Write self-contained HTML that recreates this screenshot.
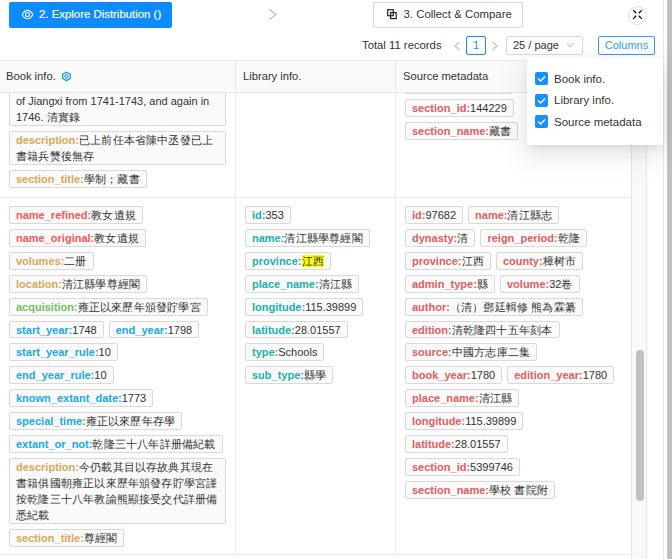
<!DOCTYPE html>
<html><head><meta charset="utf-8">
<style>
*{box-sizing:border-box}
html,body{margin:0;padding:0}
body{width:672px;height:559px;overflow:hidden;position:relative;background:#fff;font-family:"Liberation Sans",sans-serif;font-size:11px;color:#333}
.abs{position:absolute}
.btnp{left:9px;top:2px;width:163px;height:26px;background:#0d8bff;border-radius:2px;color:#fff;line-height:26px;white-space:nowrap}
.btnd{left:373px;top:2px;width:150px;height:26px;border:1px solid #d9d9d9;border-radius:2px;color:#333;line-height:24px;white-space:nowrap}
.txt{white-space:nowrap}
.box{border:1px solid #d9d9d9;border-radius:2px;height:19px;line-height:17px;white-space:nowrap}
/* table */
.hdr{left:0;top:60px;width:631px;height:33px;background:#fafafa;border-top:1px solid #ebebeb;border-bottom:1px solid #e8e8e8}
.hc{position:absolute;top:0;height:31px;line-height:30px;padding-left:6px;white-space:nowrap;font-size:11.2px}
.vp{left:0;top:93px;width:631px;height:466px;overflow:hidden}
.inner{position:absolute;left:0;top:0;width:631px}
.row{position:absolute;left:0;width:631px;border-bottom:1px solid #ebebeb}
.cell{position:absolute;top:0;height:100%;padding:8px 9px 0 9px}
.c1{left:0;width:236px;border-right:1px solid #ebebeb}
.c2{left:236px;width:160px;border-right:1px solid #ebebeb}
.c3{left:396px;width:235px}
.t{display:inline-block;vertical-align:top;border:1px solid #d9d9d9;background:#fafafa;border-radius:2px;padding:0 6px;line-height:15.9px;margin:0 5px 5px 0;white-space:nowrap}
.blk{display:block;margin-right:0;white-space:normal}
.t b{font-weight:bold}
.in{position:relative;top:1px}
.r b{color:#ff5757}
.r3 b{color:#e45e5e}
.y b{color:#daa858}
.g b{color:#70c35a}
.bl b{color:#19a8ee}
.tl b{color:#20b1ab}
i{font-style:normal;display:inline-block;vertical-align:top;white-space:nowrap;overflow:hidden}
u{text-decoration:none;display:inline-block;vertical-align:top;width:11.2px;overflow:hidden}
u.sp{width:3px}
mark{background:#ffff00;color:#333}
.sb{left:631px;top:93px;width:16px;height:466px;background:#f9f9f9;border-left:1px solid #e6e6e6;border-right:1px solid #e6e6e6}
.thumb{left:636px;top:350px;width:8px;height:151px;border-radius:4px;background:#c1c1c1}
.panel{left:527px;top:58px;width:136px;height:87px;background:#fff;box-shadow:0 3px 6px -4px rgba(0,0,0,.12),0 6px 16px 0 rgba(0,0,0,.08),0 9px 28px 8px rgba(0,0,0,.05);border-radius:2px}
.cb{position:absolute;left:8px;width:13px;height:13px;background:#1890ff;border-radius:2px}
.cbl{position:absolute;left:27px;font-size:11.5px;white-space:nowrap;color:#333}
</style></head><body>

<!-- top bar -->
<div class="abs btnp">
  <svg class="abs" style="left:12px;top:6.5px" width="13" height="11" viewBox="0 0 13 11"><path d="M1.2 5.5 C3 2 4.8 1.3 6.5 1.3 C8.2 1.3 10 2 11.8 5.5 C10 9 8.2 9.7 6.5 9.7 C4.8 9.7 3 9 1.2 5.5 Z" fill="none" stroke="#fff" stroke-width="1.15"/><circle cx="6.5" cy="5.5" r="2" fill="none" stroke="#fff" stroke-width="1.15"/></svg>
  <span class="abs" style="left:30px;top:-1px;font-size:11.4px;-webkit-text-stroke:0.15px #fff">2. Explore Distribution ()</span>
</div>
<svg class="abs" style="left:268px;top:8px" width="10" height="13" viewBox="0 0 10 13"><path d="M1.5 1.5 L8 6.5 L1.5 11.5" fill="none" stroke="#bfbfbf" stroke-width="1.3"/></svg>

<div class="abs btnd">
  <svg class="abs" style="left:13px;top:6px" width="11" height="11" viewBox="0 0 11 11"><rect x="0.7" y="0.7" width="5.6" height="6" fill="none" stroke="#222" stroke-width="1.2"/><rect x="3.6" y="3.6" width="5.6" height="6" fill="none" stroke="#222" stroke-width="1.2"/></svg>
  <span class="abs" style="left:29.5px;top:-1px;font-size:11.4px">3. Collect &amp; Compare</span>
</div>

<div class="abs" style="left:628px;top:6px;width:19px;height:19px;border:1px solid #ddd;border-radius:50%"></div>
<svg class="abs" style="left:632px;top:9px" width="11" height="11" viewBox="0 0 11 11"><g stroke="#111" stroke-width="1.2" stroke-linecap="round"><path d="M1.4 1.4 L3.6 3.6"/><path d="M9.6 1.4 L7.4 3.6"/><path d="M1.4 9.6 L3.6 7.4"/><path d="M9.6 9.6 L7.4 7.4"/></g><g fill="#111"><path d="M4.4 4.4 L2.3 3.9 L3.9 2.3 Z"/><path d="M6.6 4.4 L8.7 3.9 L7.1 2.3 Z"/><path d="M4.4 6.6 L2.3 7.1 L3.9 8.7 Z"/><path d="M6.6 6.6 L8.7 7.1 L7.1 8.7 Z"/></g></svg>

<span class="abs txt" style="left:362px;top:37px;line-height:17px;font-size:11.3px">Total 11 records</span>
<svg class="abs" style="left:453px;top:41px" width="9" height="10" viewBox="0 0 9 10"><path d="M6.5 1 L2 5 L6.5 9" fill="none" stroke="#bfbfbf" stroke-width="1.1"/></svg>
<div class="abs box" style="left:466px;top:36px;width:20px;border-color:#1890ff;color:#1890ff;text-align:center">1</div>
<svg class="abs" style="left:490px;top:41px" width="9" height="10" viewBox="0 0 9 10"><path d="M2.5 1 L7 5 L2.5 9" fill="none" stroke="#bfbfbf" stroke-width="1.1"/></svg>
<div class="abs box" style="left:506px;top:36px;width:77px;padding-left:6px">25 / page</div>
<svg class="abs" style="left:566px;top:42px" width="8" height="7" viewBox="0 0 8 7"><path d="M0.8 1.2 L4 5 L7.2 1.2" fill="none" stroke="#bfbfbf" stroke-width="1"/></svg>
<div class="abs box" style="left:598px;top:36px;width:57px;border-color:#2f9dff;color:#2f9dff;text-align:center">Columns</div>

<!-- table header -->
<div class="abs hdr">
  <div class="hc" style="left:0">Book info.</div>
  <svg class="abs" style="left:61px;top:10px" width="11" height="11" viewBox="0 0 11 11"><path d="M5.5 1.2 L9.3 3.3 L9.3 7.5 L5.5 9.6 L1.7 7.5 L1.7 3.3 Z" fill="none" stroke="#1890ff" stroke-width="1.3" stroke-linejoin="round"/><circle cx="5.5" cy="5.4" r="1.6" fill="none" stroke="#1890ff" stroke-width="1.1"/></svg>
  <div class="hc" style="left:236px;border-left:1px solid #ebebeb;left:235px;padding-left:7px">Library info.</div>
  <div class="hc" style="left:395px;border-left:1px solid #ebebeb;padding-left:7px">Source metadata</div>
</div>

<!-- table body viewport -->
<div class="abs vp">
 <div class="inner">
  <!-- row 1: bottom border at page y=197 => local 104 -->
  <div class="row" style="top:-200px;height:305px">
   <div class="cell c1" style="padding-top:0">
     <div style="position:absolute;left:9px;right:9px;bottom:4px">
      <div class="t blk y" style="padding-top:0"><span class="in">... Jiangxi and held<br>of Jiangxi from 1741-1743, and again in<br>1746. <i style="width:33.6px"><u>清</u><u>實</u><u>錄</u></i></span></div>
      <div class="t blk y"><span class="in"><b>description:</b><i style="width:134.4px"><u>已</u><u>上</u><u>前</u><u>任</u><u>本</u><u>省</u><u>陳</u><u>中</u><u>丞</u><u>發</u><u>已</u><u>上</u></i><br><i style="width:78.4px"><u>書</u><u>籍</u><u>兵</u><u>燹</u><u>後</u><u>無</u><u>存</u></i></span></div>
      <div class="t y"><span class="in"><b>section_title:</b><i style="width:56px"><u>學</u><u>制</u><u>；</u><u>藏</u><u>書</u></i></span></div>
     </div>
   </div>
   <div class="cell c2"></div>
   <div class="cell c3">
     <div style="position:absolute;left:9px;right:9px;bottom:52px">
      <div class="t r3" style="width:108px;overflow:hidden"><span class="in"><b>section_id:</b>144228</span></div><br>
      <div class="t r3"><span class="in"><b>section_id:</b>144229</span></div><br>
      <div class="t r3"><span class="in"><b>section_name:</b><i style="width:22.4px"><u>藏</u><u>書</u></i></span></div>
     </div>
   </div>
  </div>
  <!-- row 2 -->
  <div class="row" style="top:105px;height:357px">
   <div class="cell c1">
    <div class="t r"><span class="in"><b>name_refined:</b><i style="width:44.8px"><u>教</u><u>女</u><u>遺</u><u>規</u></i></span></div><br>
    <div class="t r"><span class="in"><b>name_original:</b><i style="width:44.8px"><u>教</u><u>女</u><u>遺</u><u>規</u></i></span></div><br>
    <div class="t y"><span class="in"><b>volumes:</b><i style="width:22.4px"><u>二</u><u>册</u></i></span></div><br>
    <div class="t y"><span class="in"><b>location:</b><i style="width:78.4px"><u>清</u><u>江</u><u>縣</u><u>學</u><u>尊</u><u>經</u><u>閣</u></i></span></div><br>
    <div class="t g"><span class="in"><b>acquisition:</b><i style="width:123.2px"><u>雍</u><u>正</u><u>以</u><u>來</u><u>歷</u><u>年</u><u>頒</u><u>發</u><u>貯</u><u>學</u><u>宮</u></i></span></div><br>
    <div class="t bl"><span class="in"><b>start_year:</b>1748</span></div><div class="t bl"><span class="in"><b>end_year:</b>1798</span></div><br>
    <div class="t bl"><span class="in"><b>start_year_rule:</b>10</span></div><br>
    <div class="t bl"><span class="in"><b>end_year_rule:</b>10</span></div><br>
    <div class="t bl"><span class="in"><b>known_extant_date:</b>1773</span></div><br>
    <div class="t bl"><span class="in"><b>special_time:</b><i style="width:89.6px"><u>雍</u><u>正</u><u>以</u><u>來</u><u>歷</u><u>年</u><u>存</u><u>學</u></i></span></div><br>
    <div class="t bl"><span class="in"><b>extant_or_not:</b><i style="width:123.2px"><u>乾</u><u>隆</u><u>三</u><u>十</u><u>八</u><u>年</u><u>詳</u><u>册</u><u>備</u><u>紀</u><u>載</u></i></span></div><br>
    <div class="t blk y"><span class="in"><b>description:</b><i style="width:134.4px"><u>今</u><u>仍</u><u>載</u><u>其</u><u>目</u><u>以</u><u>存</u><u>故</u><u>典</u><u>其</u><u>現</u><u>在</u></i><br><i style="width:201.6px"><u>書</u><u>籍</u><u>俱</u><u>國</u><u>朝</u><u>雍</u><u>正</u><u>以</u><u>來</u><u>歷</u><u>年</u><u>頒</u><u>發</u><u>存</u><u>貯</u><u>學</u><u>宮</u><u>謹</u></i><br><i style="width:201.6px"><u>按</u><u>乾</u><u>隆</u><u>三</u><u>十</u><u>八</u><u>年</u><u>教</u><u>諭</u><u>熊</u><u>顯</u><u>接</u><u>受</u><u>交</u><u>代</u><u>詳</u><u>册</u><u>備</u></i><br><i style="width:33.6px"><u>悉</u><u>紀</u><u>載</u></i></span></div>
    <div class="t y"><span class="in"><b>section_title:</b><i style="width:33.6px"><u>尊</u><u>經</u><u>閣</u></i></span></div>
   </div>
   <div class="cell c2">
    <div class="t tl"><span class="in"><b>id:</b>353</span></div><br>
    <div class="t tl"><span class="in"><b>name:</b><i style="width:78.4px"><u>清</u><u>江</u><u>縣</u><u>學</u><u>尊</u><u>經</u><u>閣</u></i></span></div><br>
    <div class="t tl"><span class="in"><b>province:</b><mark><i style="width:22.4px"><u>江</u><u>西</u></i></mark></span></div><br>
    <div class="t tl"><span class="in"><b>place_name:</b><i style="width:33.6px"><u>清</u><u>江</u><u>縣</u></i></span></div><br>
    <div class="t tl"><span class="in"><b>longitude:</b>115.39899</span></div><br>
    <div class="t tl"><span class="in"><b>latitude:</b>28.01557</span></div><br>
    <div class="t tl"><span class="in"><b>type:</b>Schools</span></div><br>
    <div class="t tl"><span class="in"><b>sub_type:</b><i style="width:22.4px"><u>縣</u><u>學</u></i></span></div>
   </div>
   <div class="cell c3">
    <div class="t r3"><span class="in"><b>id:</b>97682</span></div><div class="t r3"><span class="in"><b>name:</b><i style="width:44.8px"><u>清</u><u>江</u><u>縣</u><u>志</u></i></span></div><br>
    <div class="t r3"><span class="in"><b>dynasty:</b><i style="width:11.2px"><u>清</u></i></span></div><div class="t r3"><span class="in"><b>reign_period:</b><i style="width:22.4px"><u>乾</u><u>隆</u></i></span></div><br>
    <div class="t r3"><span class="in"><b>province:</b><i style="width:22.4px"><u>江</u><u>西</u></i></span></div><div class="t r3"><span class="in"><b>county:</b><i style="width:33.6px"><u>樟</u><u>树</u><u>市</u></i></span></div><br>
    <div class="t r3"><span class="in"><b>admin_type:</b><i style="width:11.2px"><u>縣</u></i></span></div><div class="t r3"><span class="in"><b>volume:</b>32<i style="width:11.2px"><u>卷</u></i></span></div><br>
    <div class="t r3"><span class="in"><b>author:</b><i style="width:126px"><u>（</u><u>清</u><u>）</u><u>鄧</u><u>廷</u><u>輯</u><u>修</u><u class="sp"></u><u>熊</u><u>為</u><u>霖</u><u>纂</u></i></span></div><br>
    <div class="t r3"><span class="in"><b>edition:</b><i style="width:100.8px"><u>清</u><u>乾</u><u>隆</u><u>四</u><u>十</u><u>五</u><u>年</u><u>刻</u><u>本</u></i></span></div><br>
    <div class="t r3"><span class="in"><b>source:</b><i style="width:78.4px"><u>中</u><u>國</u><u>方</u><u>志</u><u>庫</u><u>二</u><u>集</u></i></span></div><br>
    <div class="t r3"><span class="in"><b>book_year:</b>1780</span></div><div class="t r3"><span class="in"><b>edition_year:</b>1780</span></div><br>
    <div class="t r3"><span class="in"><b>place_name:</b><i style="width:33.6px"><u>清</u><u>江</u><u>縣</u></i></span></div><br>
    <div class="t r3"><span class="in"><b>longitude:</b>115.39899</span></div><br>
    <div class="t r3"><span class="in"><b>latitude:</b>28.01557</span></div><br>
    <div class="t r3"><span class="in"><b>section_id:</b>5399746</span></div><br>
    <div class="t r3"><span class="in"><b>section_name:</b><i style="width:59px"><u>學</u><u>校</u><u class="sp"></u><u>書</u><u>院</u><u>附</u></i></span></div>
   </div>
  </div>
 </div>
</div>

<div class="abs sb"></div>
<div class="abs thumb"></div>

<!-- outer scrollbar -->
<div class="abs" style="left:663px;top:0;width:1px;height:559px;background:#e8e8e8"></div>
<div class="abs" style="left:667px;top:0;width:5px;height:559px;background:#c1c1c1"></div>

<!-- columns dropdown -->
<div class="abs panel">
  <div class="cb" style="top:14px"><svg width="13" height="13" viewBox="0 0 13 13"><path d="M3.2 6.6 L5.6 9 L10 4.4" fill="none" stroke="#fff" stroke-width="1.4"/></svg></div>
  <div class="cbl" style="top:13.5px;line-height:15px">Book info.</div>
  <div class="cb" style="top:35.5px"><svg width="13" height="13" viewBox="0 0 13 13"><path d="M3.2 6.6 L5.6 9 L10 4.4" fill="none" stroke="#fff" stroke-width="1.4"/></svg></div>
  <div class="cbl" style="top:35px;line-height:15px">Library info.</div>
  <div class="cb" style="top:57px"><svg width="13" height="13" viewBox="0 0 13 13"><path d="M3.2 6.6 L5.6 9 L10 4.4" fill="none" stroke="#fff" stroke-width="1.4"/></svg></div>
  <div class="cbl" style="top:56.5px;line-height:15px">Source metadata</div>
</div>

</body></html>
